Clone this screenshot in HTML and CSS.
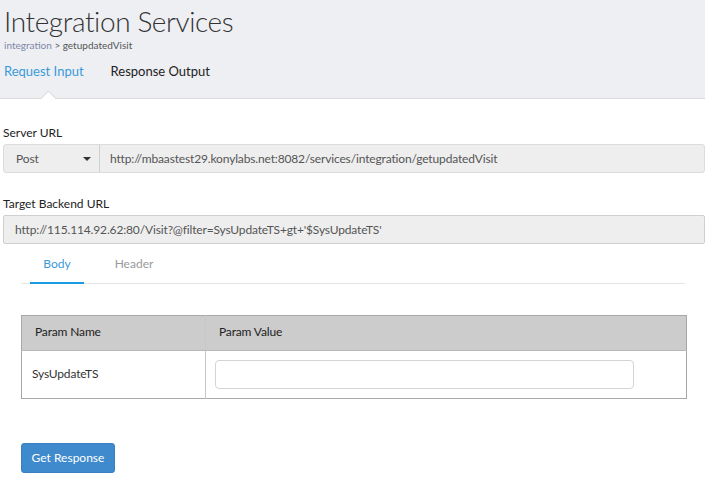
FILE: index.html
```html
<!DOCTYPE html>
<html>
<head>
<meta charset="utf-8">
<link rel="stylesheet" href="styles.css">
</head>
<body>
<header class="top">
  <h1 class="title">Integration Services</h1>
  <div class="crumb"><span class="crumb-link">integration</span> &gt; getupdatedVisit</div>
  <nav class="tabs">
    <span class="tab active">Request Input</span>
    <span class="tab">Response Output</span>
  </nav>
  <span class="notch"></span>
</header>
<main class="content">
  <label class="label">Server URL</label>
  <div class="group">
    <div class="method"><span>Post</span><span class="caret"></span></div>
    <div class="url">http://mbaastest29.konylabs.net:8082/services/integration/getupdatedVisit</div>
  </div>
  <label class="label second">Target Backend URL</label>
  <div class="field">http://115.114.92.62:80/Visit?@filter=SysUpdateTS+gt+'$SysUpdateTS'</div>
  <div class="subtabs">
    <span class="subtab active">Body</span>
    <span class="subtab">Header</span>
  </div>
  <table class="params">
    <thead>
      <tr><th class="c1">Param Name</th><th>Param Value</th></tr>
    </thead>
    <tbody>
      <tr><td class="c1">SysUpdateTS</td><td><input class="val" type="text"></td></tr>
    </tbody>
  </table>
  <button class="btn">Get Response</button>
</main>
</body>
</html>
```
FILE: styles.css
```css
* { box-sizing: border-box; }
body {
  margin: 0;
  font-family: Lato, "Open Sans", sans-serif;
  color: #333;
  background: #fff;
}
.top {
  position: relative;
  background: #eeeff3;
  height: 99px;
  border-bottom: 1px solid #d9d9d9;
  padding: 5px 0 0 4px;
}
.title {
  margin: 0;
  font-size: 28px;
  font-weight: 300;
  line-height: 32px;
  color: #333;
  letter-spacing: -0.4px;
}
.crumb {
  font-size: 10px;
  line-height: 12px;
  color: #555;
  margin-top: 2px;
}
.crumb-link { color: #8088a8; }
.tabs {
  display: flex;
  gap: 27px;
  margin-top: 12px;
  font-size: 13px;
  line-height: 16px;
}
.tab { color: #222; }
.tab.active { color: #3a9ad9; }
.notch {
  position: absolute;
  left: 40px;
  bottom: -1px;
  width: 16px;
  height: 8px;
  overflow: hidden;
}
.notch::before {
  content: "";
  position: absolute;
  left: 2px;
  top: 2px;
  width: 11px;
  height: 11px;
  background: #fff;
  border: 1px solid #d9d9d9;
  transform: rotate(45deg);
}
.content { padding: 26px 0 0 3px; font-size: 12px; letter-spacing: -0.15px; }
.label { display: block; color: #222; line-height: 16px; letter-spacing: 0; }
.label.second { margin-top: 23px; }
.group {
  margin-top: 3px;
  display: flex;
  height: 29px;
  border: 1px solid #dcdcdc;
  border-radius: 3px;
  background: #eeeeee;
  color: #555;
}
.method {
  width: 96px;
  display: flex;
  align-items: center;
  justify-content: space-between;
  padding: 0 8px 0 12px;
  border-right: 1px solid #d0d0d0;
}
.caret {
  width: 0; height: 0;
  border-left: 4px solid transparent;
  border-right: 4px solid transparent;
  border-top: 4px solid #333;
}
.url { display: flex; align-items: center; padding-left: 10px; }
.field {
  margin-top: 3px;
  height: 29px;
  border: 1px solid #cfcfcf;
  border-radius: 2px;
  background: #eeeeee;
  color: #555;
  display: flex;
  align-items: center;
  padding-left: 11px;
}
.subtabs {
  display: flex;
  margin: 6px 20px 0 18px;
  border-bottom: 1px solid #e4e4e4;
}
.subtab {
  width: 54px;
  text-align: center;
  padding: 6px 0 11px;
  color: #999;
  margin-left: 9px;
  margin-right: 14px;
  letter-spacing: 0;
}
.subtab.active {
  color: #3a9ad9;
  border-bottom: 2px solid #1a9ae0;
  margin-bottom: -1px;
}
.params {
  margin: 31px 0 0 18px;
  width: 666px;
  border-collapse: collapse;
  border: 1px solid #a8a8a8;
}
.params th {
  background: #cccccc;
  font-weight: normal;
  text-align: left;
  color: #222;
  height: 35px;
  padding: 0 13px 3px;
  border-bottom: 1px solid #b8b8b8;
}
.params th.c1, .params td.c1 { width: 184px; border-right: 1px solid #c8c8c8; }
.params td {
  height: 48px;
  padding: 0 9px;
  color: #333;
}
.params td.c1 { padding: 0 0 3px 10px; }
.val {
  width: 419px;
  height: 29px;
  border: 1px solid #d4d4d4;
  border-radius: 4px;
  display: block;
}
.btn {
  margin: 44px 0 0 18px;
  display: block;
  width: 94px;
  height: 30px;
  padding: 0 0 2px;
  background: #3e8acc;
  border: 1px solid #3a7fbf;
  border-radius: 3px;
  color: #fff;
  font-family: inherit;
  font-size: 12px;
}
```
